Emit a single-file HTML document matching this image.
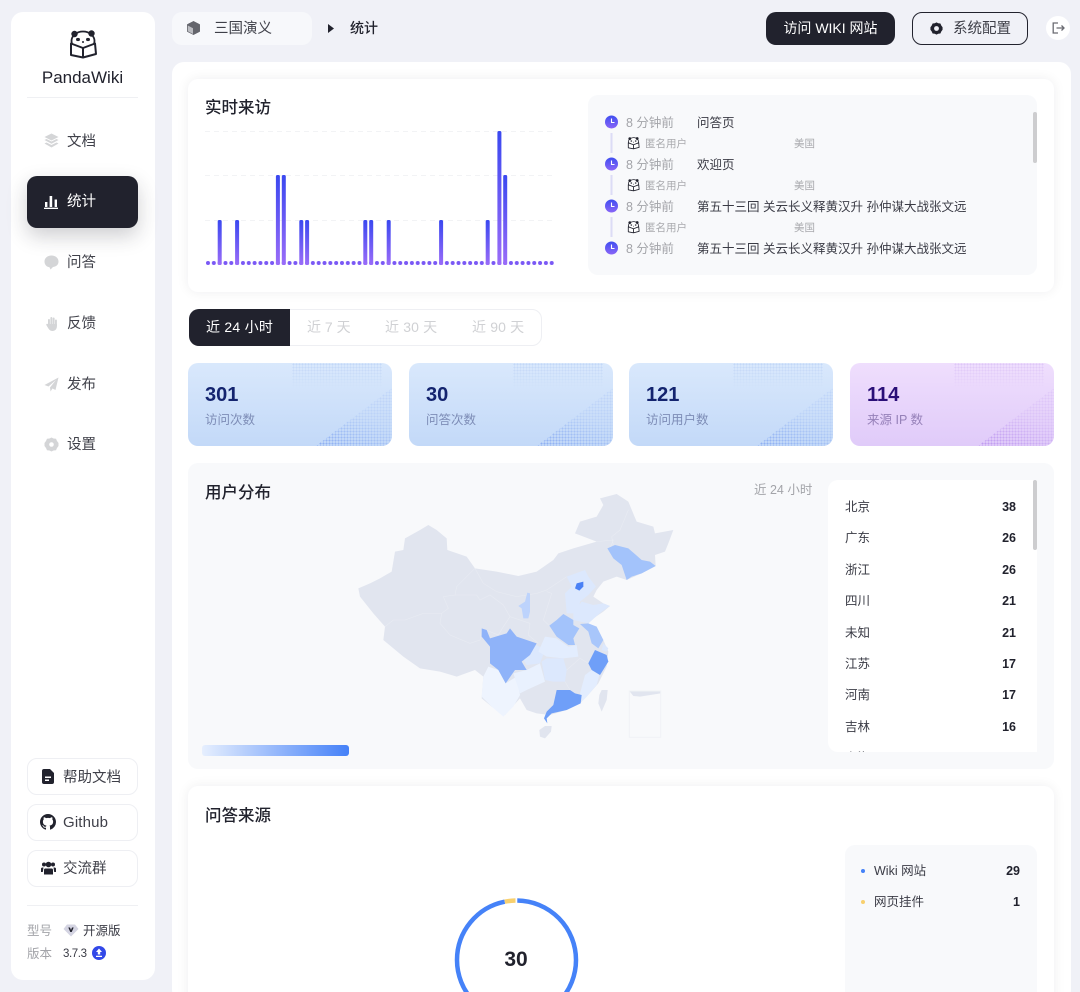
<!DOCTYPE html>
<html lang="zh-CN"><head><meta charset="utf-8"><title>PandaWiki</title>
<style>
*{box-sizing:border-box;margin:0;padding:0}
html,body{width:1080px;height:992px;overflow:hidden;background:#f0f1f7}
body{position:relative;font-family:"Liberation Sans","Noto Sans CJK SC",sans-serif;color:#21222d;font-size:14px}
.a{position:absolute}
.t{position:absolute;white-space:nowrap;line-height:20px;height:20px}
.btn{position:absolute;left:27px;width:111px;height:37px;border:1px solid #eeeff3;border-radius:10px;background:#fff}
.nav{color:#3f4049;font-size:14.500px}
.g{color:#a3a4a9}
.st{position:absolute;top:363px;width:204px;height:83px;border-radius:10px;background:linear-gradient(180deg,#d9e8fc,#c3d9f8);overflow:hidden}
.st.p{background:linear-gradient(180deg,#efdefd,#e0cbf9)}
.d1{position:absolute;left:104px;top:0;width:90px;height:26px;background:radial-gradient(circle,#b0c9f3 0.8px,transparent 1px) 0 0/3px 3px;opacity:.55;-webkit-mask-image:linear-gradient(180deg,#000,transparent);mask-image:linear-gradient(180deg,#000,transparent)}
.d2{position:absolute;right:0;bottom:0;width:76px;height:58px;background:radial-gradient(circle,#8fb0f2 0.9px,transparent 1.1px) 0 0/3px 3px;clip-path:polygon(0 100%,100% 0,100% 100%);-webkit-mask-image:linear-gradient(20deg,#000 5%,rgba(0,0,0,.25) 55%);mask-image:linear-gradient(20deg,#000 5%,rgba(0,0,0,.25) 55%)}
.p .d1{background-image:radial-gradient(circle,#d0b5f2 0.8px,transparent 1px)}
.p .d2{background-image:radial-gradient(circle,#c09cf0 0.9px,transparent 1.1px)}
.num{position:absolute;left:17px;top:20px;font-size:20px;line-height:24px;font-weight:700;color:#14246f}
.p .num{color:#2a0f78}
.lb{position:absolute;left:17px;top:47px;font-size:12.500px;line-height:20px;color:#7d8cb6}
.p .lb{color:#9580b8}
.tl{font-size:12.500px;color:#3a3b45}
.tm{font-size:12.500px;color:#a3a4a9;left:626px}
.sb{font-size:10.500px;color:#a9aaae}
.nm{left:845px;font-size:12.500px;color:#3a3b45}
.vl{right:64px;font-size:12.500px;font-weight:700;color:#21222d}
.h{font-size:16.500px;font-weight:500}
</style></head><body>
<svg width="0" height="0" style="position:absolute"><defs>
<linearGradient id="bar" x1="0" y1="0" x2="0" y2="1"><stop offset="0" stop-color="#3a48f0"/><stop offset="1" stop-color="#9a6cf8"/></linearGradient>
<linearGradient id="clk" x1="0" y1="0" x2="0" y2="1"><stop offset="0" stop-color="#3f4ef0"/><stop offset="1" stop-color="#8a66f7"/></linearGradient>
<symbol id="panda" viewBox="0 0 30 30">
<ellipse cx="15" cy="12" rx="11.500" ry="9.500" fill="#fff" stroke="#21222d" stroke-width="1.800"/>
<circle cx="6.500" cy="5" r="3.200" fill="#21222d"/><circle cx="23.500" cy="4.500" r="3.200" fill="#21222d"/>
<ellipse cx="10" cy="10.500" rx="2" ry="1.600" fill="#21222d"/><ellipse cx="20" cy="10.500" rx="2" ry="1.600" fill="#21222d"/><circle cx="15" cy="13" r="1" fill="#21222d"/>
<path d="M3 14.500 15 19 27 14.500 28 25 15 28.500 3 26Z" fill="#fff" stroke="#21222d" stroke-width="2" stroke-linejoin="round"/><path d="M15 19V28.500" stroke="#21222d" stroke-width="2"/>
</symbol>
</defs></svg>

<!-- sidebar -->
<div class="a" style="left:11px;top:12px;width:144px;height:968px;background:#fff;border-radius:12px"></div>
<svg class="a" style="left:68px;top:29px" width="30" height="30"><use href="#panda"/></svg>
<div class="t" style="left:27px;width:111px;text-align:center;top:68px;font-size:17px;color:#21222d">PandaWiki</div>
<div class="a" style="left:27px;top:97px;width:111px;height:1px;background:#eff0f3"></div>

<svg class="a" style="left:44px;top:133px" width="15" height="16" viewBox="0 0 15 16"><g fill="#d4d5d7"><path d="M7.500 0.500 14.500 4 7.500 7.500 0.500 4Z"/><path d="M0.500 7 2.500 6 7.500 8.500 12.500 6 14.500 7 7.500 10.800Z"/><path d="M0.500 10.500 2.500 9.500 7.500 12 12.500 9.500 14.500 10.500 7.500 14.500Z"/></g></svg>
<div class="t nav" style="left:67px;top:132px">文档</div>
<div class="a" style="left:27px;top:176px;width:111px;height:52px;background:#21222d;border-radius:10px;box-shadow:0 8px 20px rgba(33,34,45,.22)"></div>
<svg class="a" style="left:44px;top:194px" width="14" height="15" viewBox="0 0 14 15"><path d="M1 8h2.400v5H1ZM5.600 2h2.600v11H5.600ZM10.600 5.500H13V13h-2.400ZM0 13.600h14V15H0Z" fill="#fff"/></svg>
<div class="t" style="left:67px;top:192px;color:#fff;font-size:14.500px">统计</div>
<svg class="a" style="left:44px;top:255px" width="15" height="15" viewBox="0 0 15 15"><path d="M7.500 0.500C3.400 0.500 0.500 3 0.500 6.500S3 12 5.500 12.200L6.500 14.500 9 12C12.500 11.600 14.500 9.500 14.500 6.500 14.500 3 11.600 0.500 7.500 0.500Z" fill="#d4d5d7"/></svg>
<div class="t nav" style="left:67px;top:253px">问答</div>
<svg class="a" style="left:46px;top:316px" width="12" height="15" viewBox="0 0 12 15"><g fill="#d4d5d7"><rect x="2" y="3" width="1.900" height="7" rx=".9"/><rect x="4.400" y="1" width="1.900" height="8" rx=".9"/><rect x="6.700" y="1.500" width="1.900" height="8" rx=".9"/><rect x="9" y="3.500" width="1.900" height="7" rx=".9"/><path d="M2 8H10.900V10.500C10.900 13 9 15 6.500 15 4 15 3 13.500 1.800 11.500L0.300 9C0 8 1 7.300 1.800 8L3 9Z"/></g></svg>
<div class="t nav" style="left:67px;top:314px">反馈</div>
<svg class="a" style="left:44px;top:377px" width="15" height="15" viewBox="0 0 15 15"><path d="M14.500 0.500 0.500 8 4.500 9.500 12 3 6 10.500 6.500 14.500 8.500 11.500 11.500 13Z" fill="#d4d5d7"/></svg>
<div class="t nav" style="left:67px;top:375px">发布</div>
<svg class="a" style="left:44px;top:437px" width="15" height="15" viewBox="0 0 15 15"><path d="M7.500 0.500 9.500 1.500 12 1.800 13 4 14.500 6 14.500 9 13 11 12 13.200 9.500 13.500 7.500 14.500 5.500 13.500 3 13.200 2 11 0.500 9 0.500 6 2 4 3 1.800 5.500 1.500Z" fill="#d4d5d7"/><circle cx="7.500" cy="7.500" r="2.300" fill="#fff"/></svg>
<div class="t nav" style="left:67px;top:435px">设置</div>

<div class="btn" style="top:758px"></div>
<svg class="a" style="left:42px;top:769px" width="12" height="15" viewBox="0 0 12 15"><path d="M2 0H8L12 4V13a2 2 0 0 1-2 2H2a2 2 0 0 1-2-2V2a2 2 0 0 1 2-2Z" fill="#21222d"/><path d="M3 7.500H9V9H3ZM3 10.500H7V12H3Z" fill="#fff"/></svg>
<div class="t nav" style="left:63px;top:768px">帮助文档</div>
<div class="btn" style="top:804px"></div>
<svg class="a" style="left:40px;top:814px" width="16" height="16" viewBox="0 0 16 16"><path fill="#21222d" d="M8 0C3.580 0 0 3.580 0 8c0 3.540 2.290 6.530 5.470 7.590.4.070.55-.17.55-.38 0-.19-.01-.82-.01-1.490-2.010.370-2.530-.490-2.690-.940-.09-.230-.480-.940-.820-1.130-.280-.150-.680-.520-.010-.530.630-.010 1.080.580 1.230.820.720 1.210 1.870.870 2.330.660.070-.520.280-.870.510-1.070-1.780-.200-3.640-.890-3.640-3.950 0-.870.310-1.590.820-2.150-.080-.200-.360-1.020.080-2.120 0 0 .670-.210 2.200.820.640-.180 1.320-.270 2-.270s1.360.090 2 .270c1.530-1.040 2.200-.820 2.200-.820.440 1.100.160 1.920.080 2.120.510.560.820 1.270.820 2.150 0 3.070-1.870 3.750-3.650 3.950.290.250.540.730.540 1.480 0 1.070-.010 1.930-.010 2.200 0 .210.150.460.550.380A8.010 8.010 0 0 0 16 8c0-4.420-3.580-8-8-8z"/></svg>
<div class="t nav" style="left:63px;top:813px;font-size:15px;letter-spacing:.15px">Github</div>
<div class="btn" style="top:850px"></div>
<svg class="a" style="left:41px;top:861px" width="15" height="14" viewBox="0 0 15 14"><g fill="#21222d"><circle cx="3" cy="3.500" r="2"/><circle cx="12" cy="3.500" r="2"/><circle cx="7.500" cy="3.500" r="2.800"/><path d="M4 7.500h7a1.500 1.500 0 0 1 1 1.500V13.500H3V9a1.500 1.500 0 0 1 1-1.500Z"/><path d="M0 7.500a1.500 1.500 0 0 1 1.500-1h1L1.800 11H0ZM15 7.500a1.500 1.500 0 0 0-1.500-1h-1L13.200 11H15Z"/></g></svg>
<div class="t nav" style="left:63px;top:859px">交流群</div>
<div class="a" style="left:27px;top:905px;width:111px;height:1px;background:#eff0f3"></div>
<div class="t g" style="left:27px;top:921px;font-size:12.500px">型号</div>
<svg class="a" style="left:63px;top:924px" width="16" height="13" viewBox="0 0 16 13"><path d="M4 0.500H12L15.500 5 8 12.500 0.500 5Z" fill="#d4d4e2"/><path d="M5.300 3.500H7L8 6 9 3.500H10.700L8.700 8H7.300Z" fill="#21222d"/></svg>
<div class="t" style="left:83px;top:921px;font-size:12.500px;color:#3a3b45">开源版</div>
<div class="t g" style="left:27px;top:944px;font-size:12.500px">版本</div>
<div class="t" style="left:63px;top:944px;font-size:11.500px;letter-spacing:-.4px;color:#3a3b45">3.7.3</div>
<svg class="a" style="left:92px;top:946px" width="14" height="14" viewBox="0 0 14 14"><circle cx="7" cy="7" r="7" fill="#3248e8"/><path d="M7 2.500 10 6H8.200V8.500H5.800V6H4ZM4 9.700H10V11H4Z" fill="#fff"/></svg>

<!-- header -->
<div class="a" style="left:172px;top:12px;width:140px;height:33px;background:#f7f8fb;border-radius:10px"></div>
<svg class="a" style="left:187px;top:21px" width="13" height="14" viewBox="0 0 13 14"><path d="M6.500 0.300 12.800 3.500V10.500L6.500 13.700 0.200 10.500V3.500Z" fill="#64656c" stroke="#64656c" stroke-width=".5" stroke-linejoin="round"/><path d="M0.800 4.500 6 7.300V13 L0.800 10.200Z" fill="#bcbdc2"/></svg>
<div class="t nav" style="left:214px;top:19px">三国演义</div>
<svg class="a" style="left:328px;top:24px" width="6" height="9" viewBox="0 0 6 9"><path d="M0 0 6 4.500 0 9Z" fill="#21222d"/></svg>
<div class="t" style="left:350px;top:18px;font-weight:500">统计</div>
<div class="a" style="left:766px;top:12px;width:129px;height:33px;background:#21222d;border-radius:10px"></div>
<div class="t" style="left:766px;width:129px;text-align:center;top:18px;color:#fff">访问 WIKI 网站</div>
<div class="a" style="left:912px;top:12px;width:116px;height:33px;border:1px solid #21222d;border-radius:10px"></div>
<svg class="a" style="left:930px;top:22px" width="13" height="13" viewBox="0 0 15 15"><path d="M7.500 0.500 9.500 1.500 12 1.800 13 4 14.500 6 14.500 9 13 11 12 13.200 9.500 13.500 7.500 14.500 5.500 13.500 3 13.200 2 11 0.500 9 0.500 6 2 4 3 1.800 5.500 1.500Z" fill="#21222d"/><circle cx="7.500" cy="7.500" r="2.800" fill="#f0f1f7"/></svg>
<div class="t nav" style="left:953px;top:19px">系统配置</div>
<div class="a" style="left:1046px;top:16px;width:24px;height:24px;border-radius:50%;background:#fff"></div>
<svg class="a" style="left:1052px;top:22px" width="13" height="12" viewBox="0 0 13 12" fill="none" stroke="#6a6b72" stroke-width="1.300"><path d="M6 1H1.200V11H6M4.500 6H12M9.500 3.500 12 6 9.500 8.500"/></svg>

<!-- main -->
<div class="a" style="left:172px;top:62px;width:899px;height:940px;background:#fff;border-radius:12px"></div>

<!-- card 1 -->
<div class="a" style="left:188px;top:79px;width:866px;height:213px;background:#fff;border-radius:10px;box-shadow:0 0 12px rgba(33,34,45,.07)"></div>
<div class="t h" style="left:205px;top:98px">实时来访</div>
<svg class="a" style="left:200px;top:125px" width="360" height="145">
<g stroke="#f2f3f5" stroke-dasharray="5 4"><path d="M5 6.500H355M5 50.500H355M5 95.500H355"/></g>
<defs><pattern id="dt" patternUnits="userSpaceOnUse" x="6" y="136" width="5.826" height="4"><rect width="4" height="4" rx="2" fill="#7a58f5"/></pattern></defs>
<rect x="6" y="136" width="348" height="4" fill="url(#dt)"/>
<g fill="url(#bar)">
<rect x="17.700" y="95" width="4" height="45" rx="1.500"/>
<rect x="35.100" y="95" width="4" height="45" rx="1.500"/>
<rect x="75.900" y="50" width="4" height="90" rx="1.500"/>
<rect x="81.800" y="50" width="4" height="90" rx="1.500"/>
<rect x="99.300" y="95" width="4" height="45" rx="1.500"/>
<rect x="105.100" y="95" width="4" height="45" rx="1.500"/>
<rect x="163.300" y="95" width="4" height="45" rx="1.500"/>
<rect x="169.200" y="95" width="4" height="45" rx="1.500"/>
<rect x="186.700" y="95" width="4" height="45" rx="1.500"/>
<rect x="239.100" y="95" width="4" height="45" rx="1.500"/>
<rect x="285.700" y="95" width="4" height="45" rx="1.500"/>
<rect x="297.400" y="6" width="4" height="134" rx="1.500"/>
<rect x="303.200" y="50" width="4" height="90" rx="1.500"/>
</g></svg>

<div class="a" style="left:588px;top:95px;width:449px;height:180px;background:#f8f9fb;border-radius:10px"></div>
<div class="a" style="left:1033px;top:112px;width:4px;height:51px;background:#cdcdcf;border-radius:2px"></div>
<svg class="a" style="left:604px;top:114px" width="16" height="142">
<g fill="#dcdcf6"><rect x="6.500" y="19" width="2" height="20"/><rect x="6.500" y="61" width="2" height="20"/><rect x="6.500" y="103" width="2" height="20"/></g>
<g><circle cx="7.500" cy="8" r="6.500" fill="url(#clk)"/><circle cx="7.500" cy="50" r="6.500" fill="url(#clk)"/><circle cx="7.500" cy="92" r="6.500" fill="url(#clk)"/><circle cx="7.500" cy="134" r="6.500" fill="url(#clk)"/></g>
<g fill="none" stroke="#fff" stroke-width="1.100"><path d="M7.500 4.500V8.500H10.500M7.500 46.500V50.500H10.500M7.500 88.500V92.500H10.500M7.500 130.500V134.500H10.500"/></g></svg>
<div class="t tm" style="top:113px">8 分钟前</div><div class="t tl" style="left:697px;top:113px">问答页</div>
<svg class="a" style="left:627px;top:136px" width="13" height="14"><use href="#panda"/></svg>
<div class="t sb" style="left:645px;top:134px">匿名用户</div><div class="t sb" style="left:794px;top:134px">美国</div>
<div class="t tm" style="top:155px">8 分钟前</div><div class="t tl" style="left:697px;top:155px">欢迎页</div>
<svg class="a" style="left:627px;top:178px" width="13" height="14"><use href="#panda"/></svg>
<div class="t sb" style="left:645px;top:176px">匿名用户</div><div class="t sb" style="left:794px;top:176px">美国</div>
<div class="t tm" style="top:197px">8 分钟前</div><div class="t tl" style="left:697px;top:197px">第五十三回 关云长义释黄汉升 孙仲谋大战张文远</div>
<svg class="a" style="left:627px;top:220px" width="13" height="14"><use href="#panda"/></svg>
<div class="t sb" style="left:645px;top:218px">匿名用户</div><div class="t sb" style="left:794px;top:218px">美国</div>
<div class="t tm" style="top:239px">8 分钟前</div><div class="t tl" style="left:697px;top:239px">第五十三回 关云长义释黄汉升 孙仲谋大战张文远</div>

<!-- tabs -->
<div class="a" style="left:189px;top:309px;width:353px;height:37px;border:1px solid #eeeff3;border-radius:10px"></div>
<div class="a" style="left:189px;top:309px;width:101px;height:37px;background:#21222d;border-radius:10px 0 0 10px"></div>
<div class="t" style="left:206px;top:317px;color:#fff;letter-spacing:.25px">近 24 小时</div>
<div class="t" style="left:307px;top:317px;color:#d0d1d4">近 7 天</div>
<div class="t" style="left:385px;top:317px;color:#d0d1d4;letter-spacing:.15px">近 30 天</div>
<div class="t" style="left:472px;top:317px;color:#d0d1d4;letter-spacing:.15px">近 90 天</div>

<!-- stats -->
<div class="st" style="left:188px"><div class="d1"></div><div class="d2"></div><div class="num">301</div><div class="lb">访问次数</div></div>
<div class="st" style="left:409px"><div class="d1"></div><div class="d2"></div><div class="num">30</div><div class="lb">问答次数</div></div>
<div class="st" style="left:629px"><div class="d1"></div><div class="d2"></div><div class="num">121</div><div class="lb">访问用户数</div></div>
<div class="st p" style="left:850px"><div class="d1"></div><div class="d2"></div><div class="num">114</div><div class="lb">来源 IP 数</div></div>

<!-- distribution -->
<div class="a" style="left:188px;top:463px;width:866px;height:306px;background:#f8f9fb;border-radius:10px"></div>
<div class="t h" style="left:205px;top:483px">用户分布</div>
<div class="t g" style="left:754px;top:480px;font-size:12.500px">近 24 小时</div>

<svg class="a" style="left:340px;top:480px" width="350" height="270" viewBox="0 0 1050 810">
<g fill="#e1e5ef">
<path d="M55 325 90 310 120 295 155 275 165 215 190 210 195 175 240 150 265 135 290 150 320 175 322 210 380 230 405 265 470 275 535 288 590 275 640 240 655 220 700 205 770 185 705 160 720 125 770 110 790 75 780 55 830 42 865 65 890 125 940 140 945 160 1000 150 985 190 975 215 945 225 947 258 905 280 860 300 830 290 790 305 770 330 760 350 790 370 810 378 790 395 760 415 745 430 790 480 805 515 800 560 775 610 740 650 720 670 680 690 630 705 590 700 560 690 540 655 495 705 455 680 425 655 430 590 405 570 350 590 300 575 240 565 190 530 130 480 135 440 100 400 60 350Z"/>
<path d="M785 630 803 630 800 660 785 695 775 670 778 645Z"/>
<path d="M598 750 615 738 635 738 633 755 615 775 600 770Z"/>
<path d="M868 633H962V640L900 650 880 648Z"/>
</g>
<rect x="868" y="633" width="94" height="139" fill="none" stroke="#f0f2f6" stroke-width="3"/>
<g fill="none" stroke="#e9ecf3" stroke-width="1.600" stroke-linejoin="round">
<path d="M405 265 375 295 350 320 345 345 310 350 325 385 305 400 250 400 195 420 160 420 135 440"/>
<path d="M345 345 410 345 420 360 450 345 490 375 510 410 490 440 475 465 425 445 420 480 390 490 330 465 300 430 305 400"/>
<path d="M405 265 430 310 470 335 510 345 530 350 590 340 620 330 650 310 680 290"/>
<path d="M510 410 570 430 565 465 595 490"/>
<path d="M620 335 635 340 610 420 628 437"/>
<path d="M770 185 820 180 810 205 M860 100 865 90 840 150 815 170 820 195"/>
<path d="M680 570 720 535 745 550 M675 605 690 630"/>
</g>
<g>
<path fill="#dce8fd" d="M680 290 735 270 745 290 768 320 745 345 720 365 715 400 680 400 675 340 695 320Z"/>
<path fill="#dce8fd" d="M700 400 725 365 760 375 790 370 810 378 785 395 745 430 700 420Z"/>
<path fill="#a3c3fb" d="M802 205 825 195 865 205 905 240 930 245 947 258 905 280 875 290 860 300 845 255 820 235Z"/>
<path fill="#bdd3fc" d="M535 378 555 365 562 338 570 340 570 395 565 415 550 415 545 385Z"/>
<path fill="#a3c3fb" d="M628 437 650 420 670 402 700 420 700 435 718 445 700 475 705 495 685 495 650 470Z"/>
<path fill="#dce8fd" d="M790 490 805 505 800 515 785 510Z"/>
<path fill="#a8c6fb" d="M720 432 745 430 770 440 790 480 775 505 755 490 745 455Z"/>
<path fill="#eef4fe" d="M445 560 475 570 497 610 530 590 540 645 520 680 490 710 455 680 425 650 430 590Z"/>
<path fill="#e9f1fe" d="M520 580 560 570 600 550 615 605 560 630 540 640Z"/>
<path fill="#dce8fd" d="M545 530 590 495 615 510 600 550 560 555Z"/>
<path fill="#e3edfe" d="M595 515 615 470 650 475 685 500 710 495 715 530 670 535 620 530Z"/>
<path fill="#dce8fd" d="M605 545 620 535 670 535 680 570 675 605 640 605 615 600Z"/>
<path fill="#e3edfe" d="M720 640 735 585 755 570 778 585 770 615 740 650 725 665Z"/>
<path fill="#8fb3f9" d="M425 445 440 450 450 475 500 460 510 445 530 470 590 490 570 525 545 545 560 570 525 570 497 610 475 570 450 550 450 500 425 470Z"/>
<path fill="#6f9ff8" d="M745 550 765 510 800 525 805 545 780 585 755 570Z"/>
<path fill="#6f9ff8" d="M650 630 690 630 705 640 725 645 722 670 680 690 635 700 620 715 622 730 612 715 620 695 640 675Z"/>
<path fill="#4a81f5" d="M705 325 710 310 730 305 730 320 718 332Z"/>
</g>
</svg>

<div class="a" style="left:202px;top:745px;width:147px;height:11px;border-radius:3px;background:linear-gradient(90deg,#e6effe,#4581f8)"></div>

<div class="a" style="left:828px;top:480px;width:209px;height:272px;background:#fff;border-radius:10px 0 0 10px;overflow:hidden">
<div class="t" style="left:17px;top:268px;font-size:12.500px;color:#3a3b45">上海</div>
</div>
<div class="a" style="left:1033px;top:480px;width:4px;height:70px;background:#cdcdcf;border-radius:2px"></div>
<div class="t nm" style="top:497px">北京</div><div class="t vl" style="top:497px">38</div>
<div class="t nm" style="top:528px">广东</div><div class="t vl" style="top:528px">26</div>
<div class="t nm" style="top:560px">浙江</div><div class="t vl" style="top:560px">26</div>
<div class="t nm" style="top:591px">四川</div><div class="t vl" style="top:591px">21</div>
<div class="t nm" style="top:623px">未知</div><div class="t vl" style="top:623px">21</div>
<div class="t nm" style="top:654px">江苏</div><div class="t vl" style="top:654px">17</div>
<div class="t nm" style="top:685px">河南</div><div class="t vl" style="top:685px">17</div>
<div class="t nm" style="top:717px">吉林</div><div class="t vl" style="top:717px">16</div>

<!-- sources -->
<div class="a" style="left:188px;top:786px;width:866px;height:230px;background:#fff;border-radius:10px;box-shadow:0 0 12px rgba(33,34,45,.07)"></div>
<div class="t h" style="left:205px;top:806px">问答来源</div>
<svg class="a" style="left:450px;top:892px" width="134" height="100" viewBox="0 0 134 100">
<circle cx="66.500" cy="68" r="59.500" fill="none" stroke="#4582f8" stroke-width="4.500" stroke-dasharray="361 12.800" stroke-dashoffset="-0.800" transform="rotate(-90 66.500 68)"/>
<path d="M54.800 9.700A59.500 59.500 0 0 1 65.500 8.500" fill="none" stroke="#f8d06e" stroke-width="4.500"/>
</svg>
<div class="t" style="left:486px;width:60px;text-align:center;top:950px;font-size:21px;font-weight:700;line-height:20px">30</div>
<div class="a" style="left:845px;top:845px;width:192px;height:170px;background:#f8f9fb;border-radius:10px"></div>
<div class="a" style="left:861px;top:869px;width:4px;height:4px;border-radius:50%;background:#4582f8"></div>
<div class="t" style="left:874px;top:861px;font-size:12.500px;color:#3a3b45">Wiki 网站</div>
<div class="t" style="right:60px;top:861px;font-size:12.500px;font-weight:700">29</div>
<div class="a" style="left:861px;top:900px;width:4px;height:4px;border-radius:50%;background:#f8d06e"></div>
<div class="t" style="left:874px;top:892px;font-size:12.500px;color:#3a3b45">网页挂件</div>
<div class="t" style="right:60px;top:892px;font-size:12.500px;font-weight:700">1</div>
</body></html>
